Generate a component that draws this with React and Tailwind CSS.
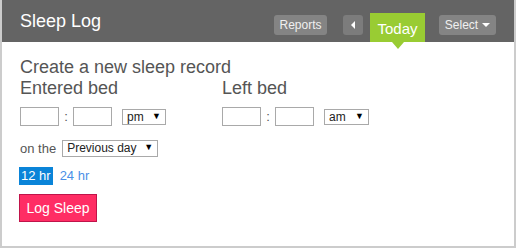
import React from 'react';

const font = { fontFamily: '"Liberation Sans", Arial, sans-serif' };

const TimeBox = () => (
  <input type="text" className="w-[39px] h-[19px] border border-[#a9a9a9] bg-white outline-none" />
);

const FakeSelect = ({ value, width }) => (
  <div className={`relative h-[16px] ${width} border border-[#a9a9a9] bg-white flex items-center pl-[4px] text-[12px] leading-none text-[#222]`}>
    <span>{value}</span>
    <span className="absolute right-[4px] top-[2px] text-[9px] text-black">▼</span>
  </div>
);

export default function App() {
  return (
    <div className="w-[516px] h-[248px] bg-white" style={font}>
      <div className="h-[248px] border-x-2 border-b-2 border-[#cccccc] flex flex-col">
        {/* Header */}
        <header className="h-[42px] bg-[#646464] flex items-start pl-[18px] pr-[18px] shrink-0">
          <h1 className="text-white text-[18px] leading-none pt-[12px]">Sleep Log</h1>
          <div className="ml-auto flex items-start h-full">
            <button className="mt-[15px] h-[20px] w-[53px] rounded-[3px] bg-[#848484] text-[#f0f0f0] text-[12px] leading-none">
              Reports
            </button>
            <button className="mt-[15px] ml-[16px] h-[20px] w-[20px] rounded-[3px] bg-[#7c7c7c] flex items-center justify-center">
              <span className="block w-0 h-0 border-y-[4px] border-y-transparent border-r-[4px] border-r-white"></span>
            </button>
            <div className="relative mt-[13px] ml-[7px] h-[29px] w-[55px] bg-[#99cc33] text-white text-[15px] flex items-center justify-center pt-[3px]">
              Today
              <span className="absolute left-1/2 -translate-x-1/2 top-[29px] w-0 h-0 border-x-[6px] border-x-transparent border-t-[7px] border-t-[#99cc33]"></span>
            </div>
            <button className="mt-[15px] ml-[14px] h-[20px] w-[57px] rounded-[3px] bg-[#848484] text-[#f0f0f0] text-[12px] leading-none flex items-center justify-center gap-[4px]">
              Select
              <span className="block w-0 h-0 border-x-[4px] border-x-transparent border-t-[4px] border-t-white"></span>
            </button>
          </div>
        </header>

        {/* Body */}
        <div className="pl-[18px] pt-[15px] text-[#555555]">
          <h2 className="text-[18px] leading-[21px]">Create a new sleep record</h2>
          <div className="flex">
            <div className="w-[202px]">
              <div className="text-[18px] leading-[21px]">Entered bed</div>
              <div className="mt-[8px] flex items-center">
                <TimeBox />
                <span className="w-[14px] text-center text-[13px]">:</span>
                <TimeBox />
                <div className="ml-[10px]">
                  <FakeSelect value="pm" width="w-[44px]" />
                </div>
              </div>
            </div>
            <div>
              <div className="text-[18px] leading-[21px]">Left bed</div>
              <div className="mt-[8px] flex items-center">
                <TimeBox />
                <span className="w-[14px] text-center text-[13px]">:</span>
                <TimeBox />
                <div className="ml-[10px]">
                  <FakeSelect value="am" width="w-[45px]" />
                </div>
              </div>
            </div>
          </div>

          <div className="mt-[12px] flex items-center text-[13px]">
            <span>on the</span>
            <div className="ml-[6px]">
              <FakeSelect value="Previous day" width="w-[96px] h-[17px]" />
            </div>
          </div>

          <div className="mt-[9px] flex items-center text-[13px] leading-[18px]">
            <span className="bg-[#0a84d8] text-white px-[2px] -ml-[1px]">12 hr</span>
            <a className="ml-[7px] text-[#4a8fe7]">24 hr</a>
          </div>

          <button className="mt-[9px] -ml-[1px] w-[78px] h-[28px] bg-[#ff2d64] border border-[#c0144a] text-white text-[14px]">
            Log Sleep
          </button>
        </div>
      </div>
    </div>
  );
}
